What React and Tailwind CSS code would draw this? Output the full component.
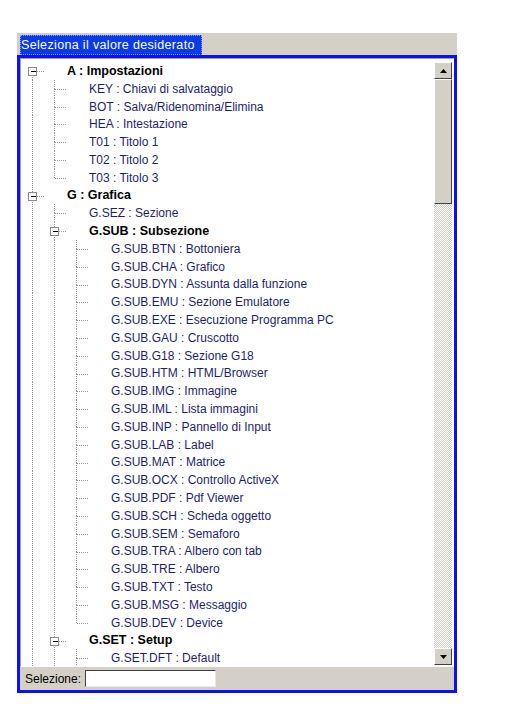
import React from 'react';

// x of the tree lines inside the list (per level) and where the text starts
const LINE_X = [11, 33, 55];
const TEXT_X = [46, 68, 90];
const ROW_H = 17.8;

const subItems = [
  'G.SUB.BTN : Bottoniera',
  'G.SUB.CHA : Grafico',
  'G.SUB.DYN : Assunta dalla funzione',
  'G.SUB.EMU : Sezione Emulatore',
  'G.SUB.EXE : Esecuzione Programma PC',
  'G.SUB.GAU : Cruscotto',
  'G.SUB.G18 : Sezione G18',
  'G.SUB.HTM : HTML/Browser',
  'G.SUB.IMG : Immagine',
  'G.SUB.IML : Lista immagini',
  'G.SUB.INP : Pannello di Input',
  'G.SUB.LAB : Label',
  'G.SUB.MAT : Matrice',
  'G.SUB.OCX : Controllo ActiveX',
  'G.SUB.PDF : Pdf Viewer',
  'G.SUB.SCH : Scheda oggetto',
  'G.SUB.SEM : Semaforo',
  'G.SUB.TRA : Albero con tab',
  'G.SUB.TRE : Albero',
  'G.SUB.TXT : Testo',
  'G.SUB.MSG : Messaggio',
  'G.SUB.DEV : Device',
];

// lvl: depth, node: has a [-] box, shape: 'first' | 'tee' | 'ell', cont: ancestor levels whose line passes through
const rows = [
  { t: 'A : Impostazioni', lvl: 0, node: true, shape: 'first', cont: [] },
  { t: 'KEY : Chiavi di salvataggio', lvl: 1, shape: 'tee', cont: [0] },
  { t: 'BOT : Salva/Ridenomina/Elimina', lvl: 1, shape: 'tee', cont: [0] },
  { t: 'HEA : Intestazione', lvl: 1, shape: 'tee', cont: [0] },
  { t: 'T01 : Titolo 1', lvl: 1, shape: 'tee', cont: [0] },
  { t: 'T02 : Titolo 2', lvl: 1, shape: 'tee', cont: [0] },
  { t: 'T03 : Titolo 3', lvl: 1, shape: 'ell', cont: [0] },
  { t: 'G : Grafica', lvl: 0, node: true, shape: 'tee', cont: [] },
  { t: 'G.SEZ : Sezione', lvl: 1, shape: 'tee', cont: [0] },
  { t: 'G.SUB : Subsezione', lvl: 1, node: true, shape: 'tee', cont: [0] },
  ...subItems.map((t, i) => ({
    t,
    lvl: 2,
    shape: i === subItems.length - 1 ? 'ell' : 'tee',
    cont: [0, 1],
  })),
  { t: 'G.SET : Setup', lvl: 1, node: true, shape: 'tee', cont: [0] },
  { t: 'G.SET.DFT : Default', lvl: 2, shape: 'tee', cont: [0, 1] },
];

function Connectors({ row }) {
  const w = TEXT_X[row.lvl];
  const mid = ROW_H / 2;
  const x = LINE_X[row.lvl] + 0.5;
  const dot = { stroke: '#999999', strokeWidth: 1, strokeDasharray: '1 1', shapeRendering: 'crispEdges' };
  return (
    <svg width={w} height={ROW_H} className="shrink-0">
      {row.cont.map((l) => (
        <line key={l} x1={LINE_X[l] + 0.5} y1={0} x2={LINE_X[l] + 0.5} y2={ROW_H} {...dot} />
      ))}
      {row.shape !== 'first' && <line x1={x} y1={0} x2={x} y2={mid} {...dot} />}
      {row.shape !== 'ell' && <line x1={x} y1={mid} x2={x} y2={ROW_H} {...dot} />}
      <line x1={x} y1={Math.round(mid) + 0.5} x2={x + 11} y2={Math.round(mid) + 0.5} {...dot} />
      {row.node && (
        <g shapeRendering="crispEdges">
          <rect x={x - 4} y={Math.round(mid) - 4 + 0.5} width={8} height={8} fill="#fff" stroke="#8c8c8c" />
          <line x1={x - 2} y1={Math.round(mid) + 0.5} x2={x + 3} y2={Math.round(mid) + 0.5} stroke="#000" />
        </g>
      )}
    </svg>
  );
}

function ArrowButton({ up }) {
  return (
    <div className="h-[17px] w-full shrink-0 bg-[#d4d0c8] border border-t-white border-l-white border-r-[#404040] border-b-[#404040] flex items-center justify-center">
      <svg width="7" height="4" viewBox="0 0 7 4">
        {up ? <path d="M3.5 0 L7 4 L0 4 Z" fill="#000" /> : <path d="M0 0 L7 0 L3.5 4 Z" fill="#000" />}
      </svg>
    </div>
  );
}

export default function App() {
  return (
    <div className="w-[525px] h-[717px] bg-white pt-[33px] pl-[17px] font-['Liberation_Sans',Arial,sans-serif]">
      <div className="w-[440px]">
        {/* tab strip */}
        <div className="h-[22px] bg-[#d4d0c8] flex items-end pl-[3px]">
          <div className="w-[182px] h-[20px] bg-[#0b3be8] border border-dotted border-[#7f9cff] text-white text-[12.5px] tracking-[0.35px] leading-none flex items-center whitespace-nowrap">
            Seleziona il valore desiderato
          </div>
        </div>

        {/* frame */}
        <div className="h-[638px] border-[3px] border-[#0c10f2] flex flex-col">
          <div className="flex-1 min-h-0 flex border border-t-[#a0a0a0] border-l-[#a0a0a0] border-r-white border-b-white bg-white">
            <div className="flex-1 pt-[3px] overflow-hidden">
              {rows.map((row) => (
                <div key={row.t} className="flex items-center h-[17.8px]">
                  <Connectors row={row} />
                  <span
                    className={
                      row.node && row.lvl < 2
                        ? 'text-[12.5px] font-bold text-black whitespace-nowrap'
                        : 'text-[12px] text-[#1e1e6e] whitespace-nowrap'
                    }
                  >
                    {row.t}
                  </span>
                </div>
              ))}
            </div>

            {/* scrollbar */}
            <div className="w-[18px] mr-[1px] mt-[3px] mb-[1px] flex flex-col">
              <ArrowButton up />
              <div className="h-[125px] shrink-0 bg-[#d4d0c8] border border-t-white border-l-white border-r-[#404040] border-b-[#404040]" />
              <div className="flex-1 bg-[image:repeating-conic-gradient(#d4d0c8_0_25%,#ffffff_0_50%)] bg-[length:2px_2px]" />
              <ArrowButton />
            </div>
          </div>

          {/* status row */}
          <div className="h-[23px] shrink-0 bg-[#d4d0c8] flex items-center pl-[5px] gap-[4px]">
            <span className="text-[12px] text-black">Selezione:</span>
            <div className="w-[131px] h-[17px] bg-white border border-t-[#404040] border-l-[#404040] border-r-[#e8e8e8] border-b-[#e8e8e8]" />
          </div>
        </div>
      </div>
    </div>
  );
}
